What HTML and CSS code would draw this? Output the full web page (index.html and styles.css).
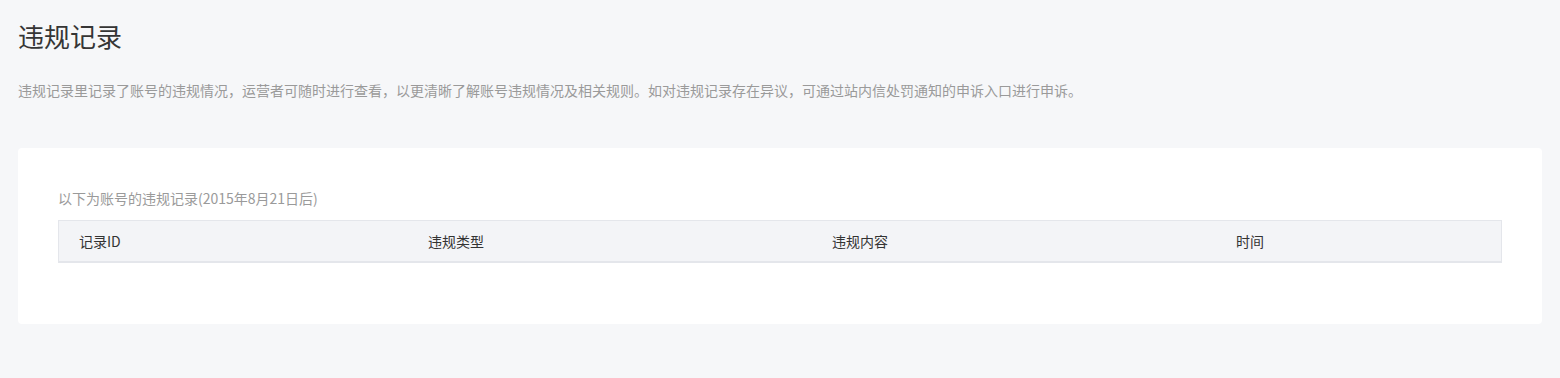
FILE: index.html
```html
<!DOCTYPE html>
<html lang="zh-CN">
<head>
  <meta charset="UTF-8" />
  <title>违规记录</title>
  <link rel="stylesheet" href="styles.css">
</head>
<body>
  <div class="page">
    <h2 class="page__title">违规记录</h2>
    <p class="page__desc">违规记录里记录了账号的违规情况，运营者可随时进行查看，以更清晰了解账号违规情况及相关规则。如对违规记录存在异议，可通过站内信处罚通知的申诉入口进行申诉。</p>

    <section class="record_card">
      <p class="record_card__tips">以下为账号的违规记录(2015年8月21日后)</p>
      <div class="record_table">
        <div class="record_table__head">
          <div class="record_table__cell">记录ID</div>
          <div class="record_table__cell">违规类型</div>
          <div class="record_table__cell">违规内容</div>
          <div class="record_table__cell">时间</div>
        </div>
      </div>
    </section>
  </div>
</body>
</html>
```

FILE: styles.css
```css
/* ── 全体 ── */
html, body { margin:0; padding:0; }
body {
  background: #f6f7f9;
  font-family: "Noto Sans CJK SC", "Noto Sans", sans-serif;
  color: #333;
}

.page {
  padding: 18px;
}
.page__title {
  margin: 0;
  font-size: 26px;
  line-height: 36px;
  font-weight: normal;
  color: #353535;
}
.page__desc {
  margin: 26px 0 0;
  font-size: 14px;
  line-height: 20px;
  color: #9a9a9a;
}

/* ── 记录卡片 ── */
.record_card {
  margin-top: 48px;
  background: #fff;
  border-radius: 4px;
  padding: 40px 40px 61px;
}
.record_card__tips {
  margin: 0 0 12px;
  font-size: 14px;
  line-height: 20px;
  color: #9a9a9a;
}

.record_table {
  border: 1px solid #e4e6eb;
  border-bottom-width: 2px;
  background: #f3f4f7;
}
.record_table__head {
  display: grid;
  grid-template-columns: 349px 404px 404px 1fr;
}
.record_table__cell {
  padding-left: 20px;
  font-size: 14px;
  line-height: 40px;
  color: #333;
}
```
